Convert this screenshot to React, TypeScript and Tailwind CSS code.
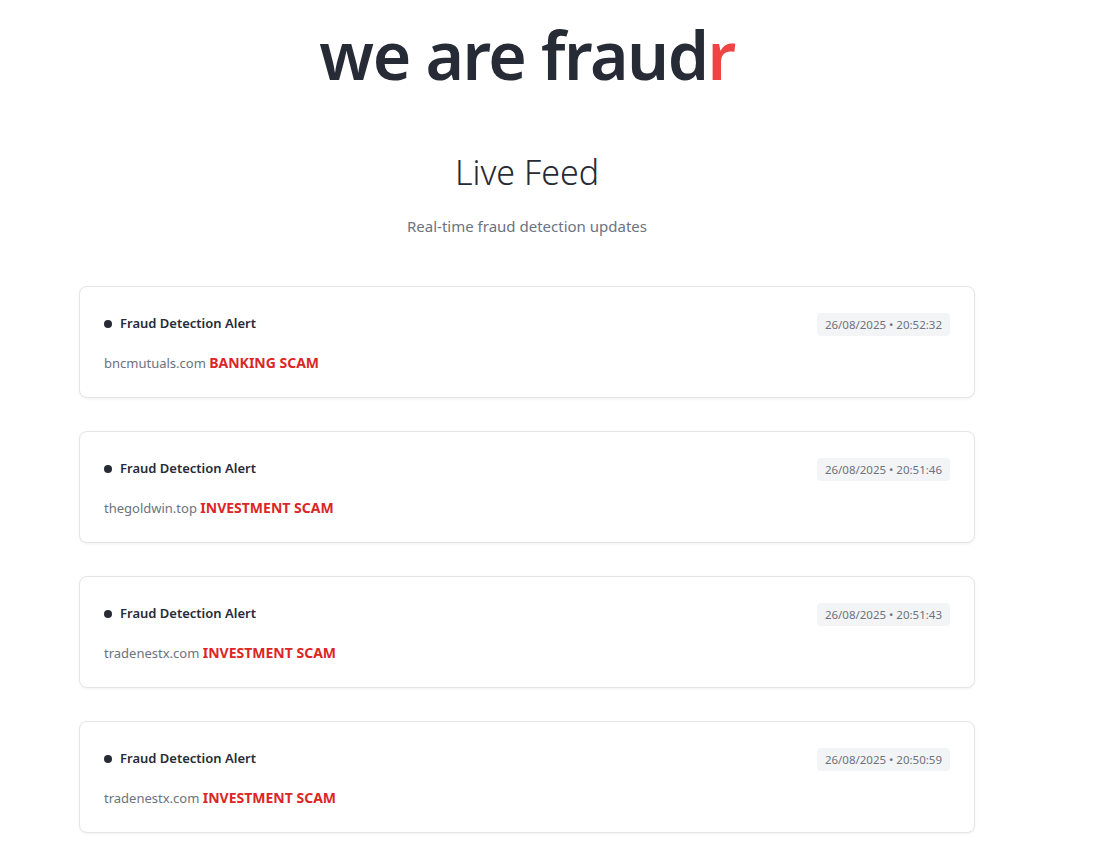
const alerts = [
  { domain: "bncmutuals.com", kind: "BANKING SCAM", time: "26/08/2025 • 20:52:32" },
  { domain: "thegoldwin.top", kind: "INVESTMENT SCAM", time: "26/08/2025 • 20:51:46" },
  { domain: "tradenestx.com", kind: "INVESTMENT SCAM", time: "26/08/2025 • 20:51:43" },
  { domain: "tradenestx.com", kind: "INVESTMENT SCAM", time: "26/08/2025 • 20:50:59" },
];

const AlertCard = ({ domain, kind, time }: { domain: string; kind: string; time: string }) => (
  <div className="bg-white border border-[#e3e5e8] rounded-lg shadow-[0_1px_3px_rgba(0,0,0,0.06)] px-6 pt-[26px] pb-[24px]">
    <div className="flex items-center justify-between mb-[17px]">
      <div className="flex items-center gap-2">
        <span className="w-2 h-2 rounded-full bg-[#262b36]" />
        <span className="text-[13px] font-semibold text-[#262b36]">Fraud Detection Alert</span>
      </div>
      <span className="text-[11.5px] text-[#6b7280] bg-[#f3f4f6] rounded px-2 py-[3px] leading-[17px]">{time}</span>
    </div>
    <p className="text-[13px] leading-5 text-[#6b7280]">
      {domain} <span className="text-[14px] font-bold text-[#dc2626]">{kind}</span>
    </p>
  </div>
);

export default function App() {
  return (
    <div className="min-h-screen bg-white font-['Noto_Sans',sans-serif]">
      <div className="w-[896px] ml-[79px] flex flex-col">
        <h1 className="text-center text-[66px] leading-none font-semibold tracking-[-1.5px] text-[#262b36] mt-[21px]">
          we are fraud<span className="text-[#ef4444]">r</span>
        </h1>
        <h2 className="text-center text-[34px] font-light text-[#262b36] mt-[65px] leading-10">Live Feed</h2>
        <p className="text-center text-[15px] text-[#6b7280] mt-[23px]">Real-time fraud detection updates</p>
        <div className="flex flex-col gap-[33px] mt-[48px]">
          {alerts.map((a, i) => (
            <AlertCard key={i} {...a} />
          ))}
        </div>
      </div>
    </div>
  );
}
